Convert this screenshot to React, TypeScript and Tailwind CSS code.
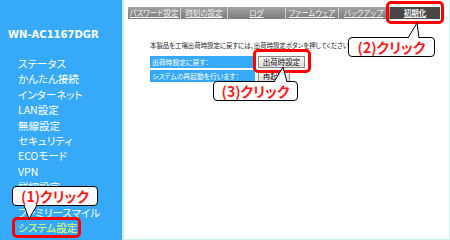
const jp = "font-['Noto_Sans_CJK_JP',sans-serif] [font-feature-settings:'palt']";

const menu = [
  'ステータス',
  'かんたん接続',
  'インターネット',
  'LAN設定',
  '無線設定',
  'セキュリティ',
  'ECOモード',
  'VPN',
  '詳細設定',
];

const tabs = [
  { label: 'パスワード設定', w: 'w-[52px]' },
  { label: '時刻の設定', w: 'w-[47px]' },
  { label: 'ログ', w: 'w-[58px]' },
  { label: 'ファームウェア', w: 'w-[53px]' },
  { label: 'バックアップ', w: 'w-[50px]' },
];

function Tail({ className, points }: { className: string; points: string }) {
  // speech-bubble tail: white wedge with two black sides
  const p = points.split(' ');
  return (
    <svg className={className} width="20" height="18" viewBox="0 0 20 18">
      <polygon points={points} fill="#fff" />
      <polyline points={`${p[0]} ${p[1]} ${p[2]}`} fill="none" stroke="#000" strokeWidth="1" />
    </svg>
  );
}

function Bubble({ className, label }: { className: string; label: string }) {
  return (
    <div
      className={`absolute flex items-center justify-center rounded-[4px] border border-black bg-white text-[14px] font-bold leading-none text-[#ff1a1a] ${jp} ${className}`}
    >
      {label}
    </div>
  );
}

export default function App() {
  return (
    <div className="relative flex h-[240px] w-[450px] overflow-hidden bg-white">
      {/* sidebar */}
      <aside className={`flex w-[122px] shrink-0 flex-col bg-[#36aaf8] pt-[28px] text-white ${jp}`}>
        <div className="pl-[8px] font-['DejaVu_Sans',sans-serif] text-[10px] font-bold leading-[14px]">
          WN-AC1167DGR
        </div>
        <ul className="mt-[14px] pl-[18px] text-[10.5px] leading-[15.4px]">
          {menu.map((m) => (
            <li key={m}>{m}</li>
          ))}
        </ul>
        <ul className="mt-[10px] pl-[18px] text-[10.5px] leading-[15.5px]">
          <li>ファミリースマイル</li>
          <li className="text-[#f2ff5c]">システム設定</li>
        </ul>
      </aside>

      {/* content */}
      <main className="flex flex-1 flex-col border-b border-l-2 border-r border-[#c6f2f6] pt-[7px]">
        <nav className={`ml-[4px] flex h-[12px] w-[312px] bg-gradient-to-b from-[#a3a3a3] to-[#7c7c7c] text-[7.5px] leading-[12px] text-[#f4f4f4] ${jp}`}>
          {tabs.map((t, i) => (
            <div
              key={t.label}
              className={`${t.w} whitespace-nowrap text-center underline ${i > 0 ? 'border-l border-[#d0d0d0]' : ''}`}
            >
              {t.label}
            </div>
          ))}
          <div className="ml-[2px] flex-1 whitespace-nowrap bg-[#474747] text-center font-bold underline">初期化</div>
        </nav>

        <p className={`ml-[26px] mt-[22px] whitespace-nowrap text-[6.4px] leading-[10px] text-[#222] ${jp}`}>
          本製品を工場出荷時設定に戻すには、出荷時設定ボタンを押してください。
        </p>

        <div className={`ml-[26px] mt-[5px] flex flex-col gap-[2px] text-[6.8px] ${jp}`}>
          <div className="flex items-center gap-[3px]">
            <div className="h-[12px] w-[105px] whitespace-nowrap bg-[#36aaf8] pl-[2px] leading-[12px] text-white">出荷時設定に戻す：</div>
            <button className="h-[12px] w-[47px] whitespace-nowrap border border-[#8a8a8a] bg-gradient-to-b from-[#fafafa] to-[#dcdcdc] text-[7.5px] leading-[10px] text-[#111]">
              出荷時設定
            </button>
          </div>
          <div className="flex items-center gap-[3px]">
            <div className="h-[12px] w-[105px] whitespace-nowrap bg-[#36aaf8] pl-[2px] leading-[12px] text-white">システムの再起動を行います：</div>
            <button className="h-[12px] w-[32px] whitespace-nowrap border border-[#8a8a8a] bg-gradient-to-b from-[#fafafa] to-[#dcdcdc] text-[7.5px] leading-[10px] text-[#111]">
              再起動
            </button>
          </div>
        </div>
      </main>

      {/* annotations */}
      <div className="absolute left-[386px] top-[1px] h-[23px] w-[58px] rounded-[5px] border-[3px] border-[#ff0000]" />
      <div className="absolute left-[253px] top-[49px] h-[24px] w-[58px] rounded-[5px] border-[3px] border-[#ff0000]" />
      <div className="absolute left-[12px] top-[217px] h-[21px] w-[69px] rounded-[5px] border-[3px] border-[#ff0000]" />

      <Bubble className="left-[348px] top-[37px] h-[20px] w-[87px]" label="(2)クリック" />
      <Tail className="absolute left-[403px] top-[21px]" points="5,17 14,2 16,17" />

      <Bubble className="left-[213px] top-[81px] h-[20px] w-[85px]" label="(3)クリック" />
      <Tail className="absolute left-[268px] top-[65px]" points="6,17 15,2 19,17" />

      <Bubble className="left-[12px] top-[186px] h-[20px] w-[86px]" label="(1)クリック" />
      <svg className="absolute left-[20px] top-[204px]" width="20" height="18" viewBox="0 0 20 18">
        <polygon points="4,1 9,15 17,1" fill="#fff" />
        <polyline points="4,1 9,15 17,1" fill="none" stroke="#000" strokeWidth="1" />
      </svg>
    </div>
  );
}
